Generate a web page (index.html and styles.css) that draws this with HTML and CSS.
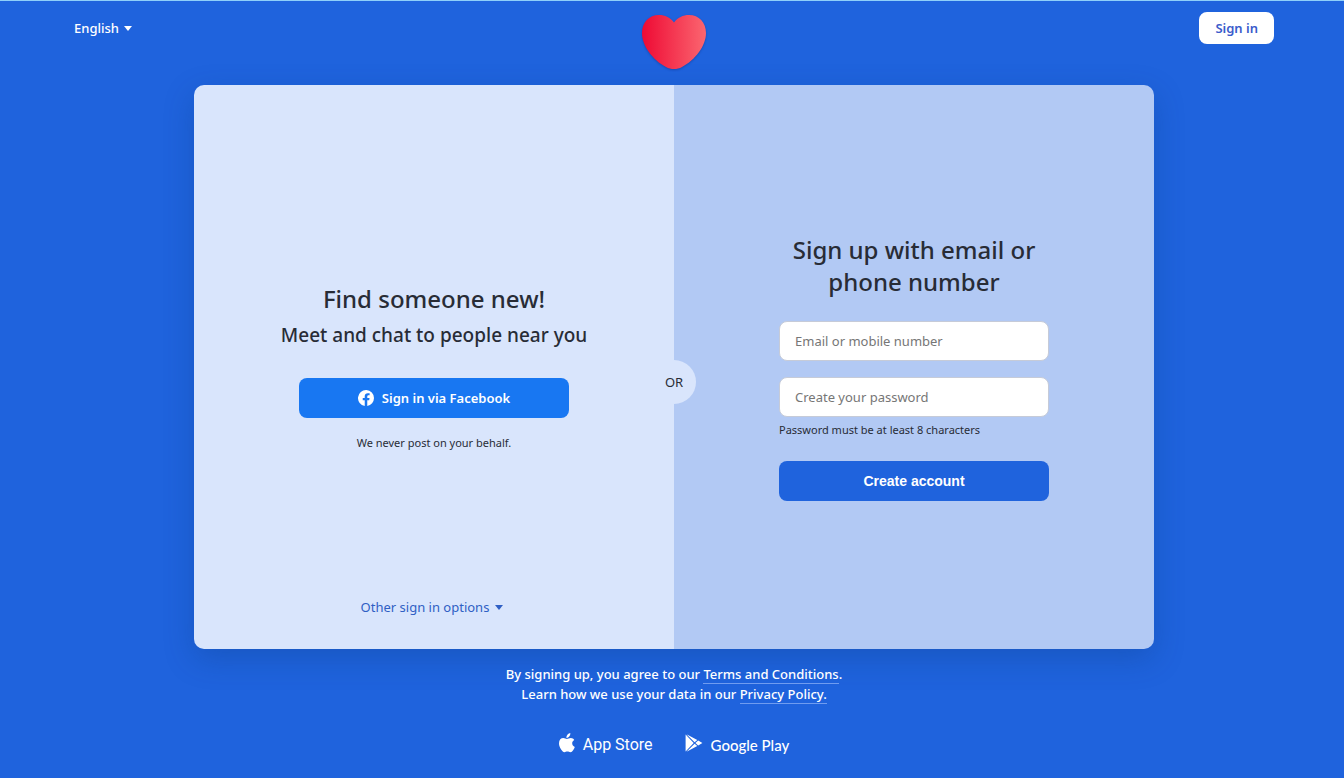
FILE: index.html
```html
<!DOCTYPE html>
<html lang="en">
<head>
<meta charset="utf-8">
<meta name="viewport" content="width=device-width, initial-scale=1">
<title>Sign up</title>
<link rel="stylesheet" href="styles.css">
</head>
<body>
<div class="page">
  <header class="header">
    <button class="language" type="button">English <span class="caret"></span></button>
    <a class="logo" href="#" aria-label="Home">
      <svg width="66" height="56" viewBox="0 0 66 56" aria-hidden="true">
        <defs><linearGradient id="heart" x1="0" x2="1" y1="0" y2="0"><stop offset="0" stop-color="#ee0a34"/><stop offset="1" stop-color="#fb6670"/></linearGradient></defs>
        <path fill="url(#heart)" d="M33 8.500C29.500 3.500 24 1 18 1 8 1 1 8.500 1 19c0 13 11 27 24 34 5 2.700 11 2.700 16 0 13-7 24-21 24-34C65 8.500 58 1 48 1c-6 0-11.500 2.500-15 7.500Z"/>
      </svg>
    </a>
    <a class="signin" href="#">Sign in</a>
  </header>

  <main class="card">
    <section class="panel panel-social">
      <div class="intro">
        <h1 class="title">Find someone new!</h1>
        <p class="subtitle">Meet and chat to people near you</p>
        <button class="button button-facebook" type="button">
          <svg width="16" height="16" viewBox="0 0 24 24" aria-hidden="true"><path fill="#fff" d="M24 12a12 12 0 1 0-13.900 11.900v-8.400H7.100V12h3V9.400c0-3 1.800-4.700 4.600-4.700 1.300 0 2.700.2 2.700.2v3h-1.500c-1.500 0-2 .9-2 1.900V12h3.400l-.5 3.500h-2.900v8.400A12 12 0 0 0 24 12Z"/></svg>
          Sign in via Facebook
        </button>
        <p class="note">We never post on your behalf.</p>
      </div>
      <button class="options" type="button">Other sign in options <span class="caret"></span></button>
    </section>

    <section class="panel panel-form">
      <span class="or">OR</span>
      <form class="form">
        <h2 class="title form-title">Sign up with email or phone number</h2>
        <input class="field" type="text" placeholder="Email or mobile number" aria-label="Email or mobile number">
        <input class="field" type="password" placeholder="Create your password" aria-label="Create your password" aria-describedby="hint">
        <p class="hint" id="hint">Password must be at least 8 characters</p>
        <button class="button button-create" type="button">Create account</button>
      </form>
    </section>
  </main>

  <footer class="footer">
    <p class="legal">By signing up, you agree to our <a class="legal-link" href="#">Terms and Conditions</a>.<br>Learn how we use your data in our <a class="legal-link" href="#">Privacy Policy.</a></p>
    <div class="stores">
      <a class="store" href="#">
        <svg width="16" height="20" viewBox="0 0 16 20" aria-hidden="true"><path fill="#fff" d="M11.300 0c.2 1.500-.4 2.700-1.100 3.500C9.500 4.400 8.500 5 7.500 4.900 7.300 3.600 7.900 2.400 8.600 1.600 9.300.7 10.400.1 11.300 0ZM15.200 6.900c-1.300.8-2 1.900-2 3.300 0 1.700 1 3 2.600 3.700-.4 1.200-1 2.300-1.700 3.300-.8 1.200-1.600 2-2.700 2-1.200 0-1.600-.7-3-.7s-1.900.7-3 .7c-1.200 0-2.100-1-2.900-2.200C.8 14.800 0 12.500 0 10.300 0 7 2 5.100 4.300 5.100c1.500 0 2.500.9 3.600.9 1 0 2.300-1 4-1 1.400 0 2.600.7 3.300 1.900Z"/></svg>
        <span class="store-apple">App Store</span>
      </a>
      <a class="store" href="#">
        <svg width="18" height="20" viewBox="0 0 18 20" aria-hidden="true"><path fill="#fff" d="M.6 1.600v16.800L8.700 10ZM1.500 1.300l10.800 5.800-2.700 2.200ZM1.500 18.700l8.100-8L12.300 13ZM13.200 7.600 17.400 10l-4.200 2.400L10.400 10Z"/></svg>
        <span class="store-google">Google Play</span>
      </a>
    </div>
  </footer>
</div>
</body>
</html>
```
FILE: styles.css
```css
* { box-sizing: border-box; }

body {
  margin: 0;
  background: #1f63dd;
  color: #282c36;
  font: 400 13px/20px "Noto Sans", "Open Sans", sans-serif;
}

h1, h2, p { margin: 0; }
a { color: inherit; text-decoration: none; }
button { border: 0; background: none; padding: 0; color: inherit; font: inherit; cursor: pointer; }

.page {
  display: flex;
  flex-direction: column;
  min-height: 100vh;
  padding-left: 4px;
  border-top: 1px solid #8fd0fa;
}

.header {
  display: grid;
  grid-template-columns: 1fr auto 1fr;
  width: 100%;
  max-width: 1200px;
  height: 84px;
  margin: 0 auto;
  padding-top: 11px;
  align-items: start;
  color: #fff;
}

.language {
  display: flex;
  align-items: center;
  justify-self: start;
  gap: 5px;
  height: 32px;
  font-weight: 500;
}

.caret {
  border: 4px solid transparent;
  border-top: 5px solid currentColor;
  border-bottom: 0;
}

.logo { display: block; height: 60px; padding-top: 2px; filter: drop-shadow(0 1px 1px rgba(0, 20, 90, 0.3)); }

.signin {
  justify-self: end;
  padding: 6px 16px;
  border-radius: 8px;
  background: #fff;
  color: #3a5bcb;
  font-size: 13px;
  font-weight: 600;
}

.card {
  display: grid;
  grid-template-columns: 1fr 1fr;
  flex: 1;
  width: 100%;
  max-width: 960px;
  margin: 0 auto;
  border-radius: 10px;
  overflow: hidden;
  box-shadow: 0 10px 30px rgba(10, 60, 130, 0.3);
}

.panel { display: grid; justify-items: center; }

.panel-social {
  grid-template-rows: 1fr auto 1fr;
  background: #d9e5fc;
  text-align: center;
}

.panel-form {
  position: relative;
  align-items: center;
  background: #b2c9f4;
}

.intro {
  display: flex;
  flex-direction: column;
  align-items: center;
  grid-row: 2;
  padding-top: 2px;
}

.title { font-size: 24px; font-weight: 500; line-height: 32px; }
.subtitle { margin-top: 4px; font-size: 19px; font-weight: 500; line-height: 32px; }

.button {
  display: flex;
  align-items: center;
  justify-content: center;
  gap: 8px;
  width: 270px;
  height: 40px;
  border-radius: 8px;
  color: #fff;
}

.button-facebook { margin-top: 27px; background: #1877f2; font-weight: 600; }
.note { margin-top: 15px; font-size: 11px; }

.options {
  display: flex;
  align-items: center;
  align-self: end;
  gap: 6px;
  grid-row: 3;
  margin-bottom: 32px;
  padding-right: 4px;
  color: #2f5fc4;
}

.or {
  display: flex;
  align-items: center;
  justify-content: center;
  position: absolute;
  top: calc(50% - 7px);
  left: -22px;
  width: 44px;
  height: 44px;
  border-radius: 50%;
  background: #d9e5fc;
}

.form { display: flex; flex-direction: column; width: 270px; }
.form-title { margin-bottom: 23px; text-align: center; }

.field {
  width: 100%;
  height: 40px;
  margin-bottom: 16px;
  padding: 0 15px;
  border: 1px solid #c6cbd8;
  border-radius: 8px;
  background: #fff;
  color: #282c36;
  font: inherit;
}

.field::placeholder { color: #767676; opacity: 1; }
.hint { margin-top: -13px; font-size: 11px; }

.button-create {
  margin-top: 21px;
  background: #1f63dd;
  font-family: "Liberation Sans", Arial, sans-serif;
  font-size: 14px;
  font-weight: 700;
}

.footer {
  display: flex;
  flex-direction: column;
  align-items: center;
  gap: 29px;
  padding: 15px 0 21px;
  color: #fff;
}

.legal { font-weight: 500; text-align: center; }
.legal-link { border-bottom: 1px solid #6f9cf0; }
.stores { display: flex; gap: 32px; }

.store {
  display: flex;
  gap: 8px;
  font-size: 16px;
  line-height: 24px;
}

.store-apple { font-family: Roboto, sans-serif; }
.store-google { font-family: Lato, sans-serif; font-size: 15px; font-weight: 500; }
```
